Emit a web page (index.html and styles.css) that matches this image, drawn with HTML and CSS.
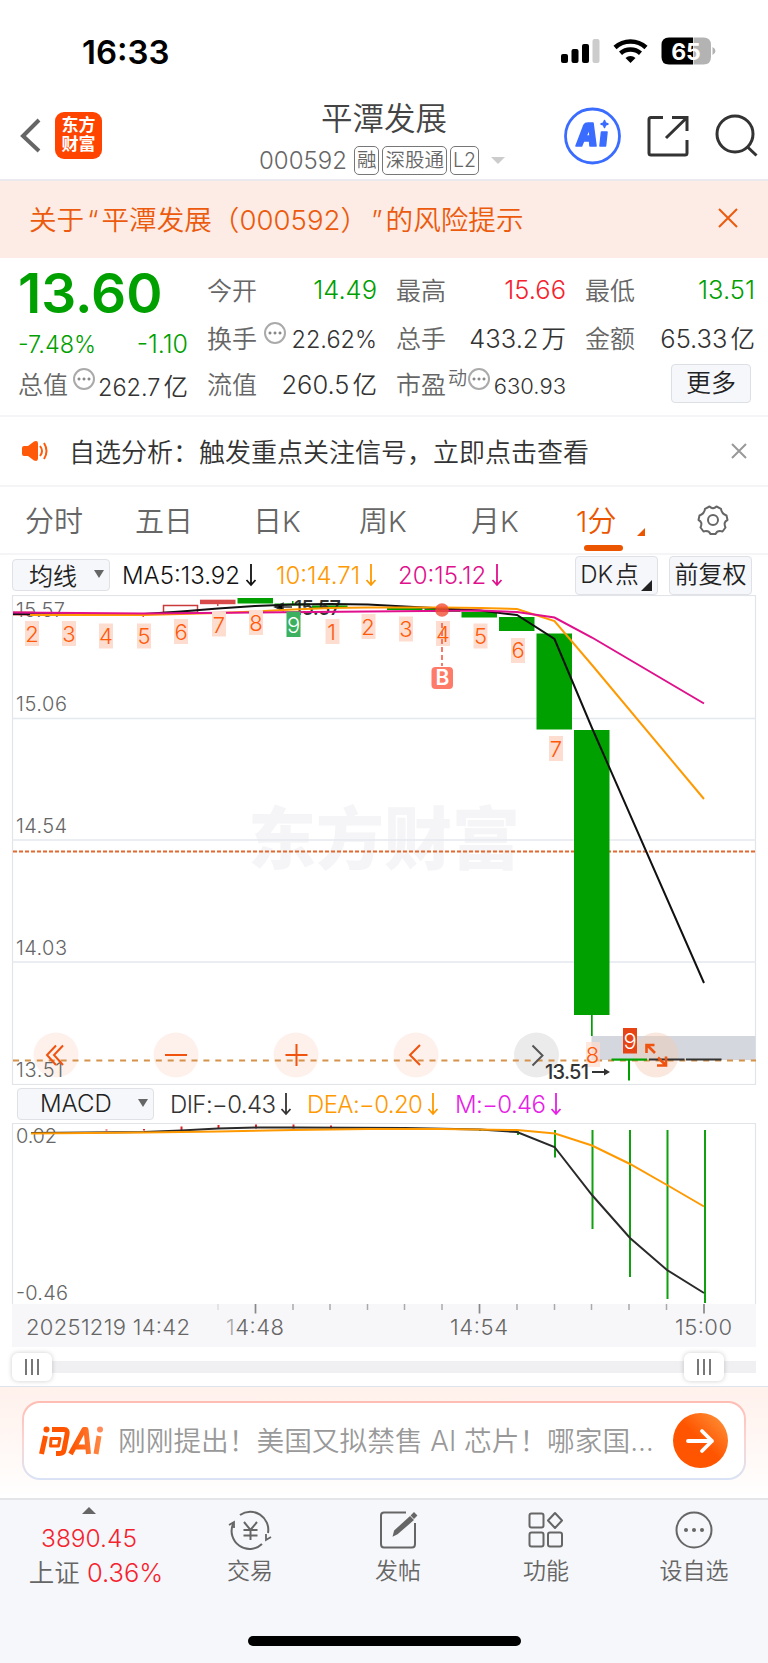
FILE: index.html
```html
<!DOCTYPE html>
<html lang="zh-CN">
<head>
  <meta charset="UTF-8">
  <title>平潭发展 000592</title>
  <link rel="stylesheet" href="styles.css">
</head>
<body>

  <div class="status">
    <span class="clock">16:33</span>
    <svg class="status-icons" width="160" height="32" viewBox="0 0 160 32">
      <rect x="2" y="18" width="7" height="9" rx="2"/>
      <rect x="12.500" y="13" width="7" height="14" rx="2"/>
      <rect x="23" y="8" width="7" height="19" rx="2"/>
      <rect x="33.500" y="3" width="7" height="24" rx="2" fill="#ccc"/>
      <path d="M56 11.500a23 23 0 0 1 31 0" fill="none" stroke="#000" stroke-width="4.500"/>
      <path d="M61.500 17.200a15 15 0 0 1 20 0" fill="none" stroke="#000" stroke-width="4.500"/>
      <path d="M71.500 27l-5-5a7.500 7.500 0 0 1 10 0z"/>
      <path d="M110 1.500h24v27h-24q-7.500 0-7.500-7.500v-12q0-7.500 7.500-7.500z"/>
      <path d="M134.500 1.500h10q7.500 0 7.500 7.500v12q0 7.500-7.500 7.500h-10zM153.500 11q3 1.500 3 4t-3 4z" fill="#b3b3b3"/>
      <text x="127" y="23.500" class="battery">65</text>
    </svg>
  </div>

  <header class="header">
    <svg class="back" width="22" height="36" viewBox="0 0 22 36"><path d="M19 2L3 18l16 15" fill="none" stroke="#666" stroke-width="4"/></svg>
    <div class="logo">东方<br>财富</div>
    <div class="title">
      <h1>平潭发展</h1>
      <div class="code">
        <span>000592</span><b>融</b><b>深股通</b><b>L2</b><i></i>
      </div>
    </div>
    <svg class="tools" width="204" height="58" viewBox="0 0 204 58">
      <circle cx="28.500" cy="29" r="27" fill="none" stroke="#3a6cff" stroke-width="2.800"/>
      <path d="M12 39l8-21q1-2 4-2h5l3 23h-6l-.4-5h-6l-2 5zM22 29h4l-.5-7zM37.500 25h5.500l-1.500 14h-5.500zM40.500 13.500l1 2.500 2.500 1-2.500 1-1 2.500-1-2.500-2.500-1 2.500-1z" fill="#3a6cff" stroke="#3a6cff" stroke-width="1.600" stroke-linejoin="round"/>
      <path d="M99 10.500H87q-2 0-2 2V46q0 2 2 2h34q2 0 2-2V33M108 10.500h15V24M123 10.500L102 31" fill="none" stroke="#333" stroke-width="3"/>
      <circle cx="171" cy="27" r="18" fill="none" stroke="#333" stroke-width="3"/>
      <path d="M183 39.500l9.500 9" stroke="#333" stroke-width="3"/>
    </svg>
  </header>

  <div class="notice">
    <span>关于<q>“</q>平潭发展（000592）<q class="close-quote">”</q>的风险提示</span>
    <svg width="20" height="20" viewBox="0 0 20 20"><path d="M1 1l18 18M19 1L1 19" stroke="#ec5a0d" stroke-width="2"/></svg>
  </div>

  <section class="quote">
    <div class="price">13.60</div>
    <div class="cell"><label>今开</label><span class="green">14.49</span></div>
    <div class="cell"><label>最高</label><span class="red">15.66</span></div>
    <div class="cell"><label>最低</label><span class="green">13.51</span></div>

    <div class="cell change"><span class="green">-7.48%</span><span class="green second">-1.10</span></div>
    <div class="cell"><label>换手</label><em></em><span class="mid">22.62%</span></div>
    <div class="cell"><label>总手</label><span>433.2<u>万</u></span></div>
    <div class="cell"><label>金额</label><span>65.33<u>亿</u></span></div>

    <div class="cell"><label>总值</label><em></em><span class="mid">262.7<u>亿</u></span></div>
    <div class="cell"><label>流值</label><span>260.5<u>亿</u></span></div>
    <div class="cell pe"><label>市盈<sup>动</sup></label><em></em><span class="small">630.93</span></div>
    <div class="cell more"><button>更多</button></div>
  </section>

  <div class="analysis">
    <svg width="26" height="22" viewBox="0 0 26 22">
      <path d="M2 6h4l6-4.500q4-1.500 4 2v15q0 3.500-4 2L6 16H2q-2 0-2-2V8q0-2 2-2z" fill="#ff5a0a"/>
      <path d="M18 6q4 5 0 10M22 3q5 8 0 16" fill="none" stroke="#ff5a0a" stroke-width="2"/>
    </svg>
    <span>自选分析：触发重点关注信号，立即点击查看</span>
    <svg class="close" width="16" height="16" viewBox="0 0 16 16"><path d="M1 1l14 14M15 1L1 15" stroke="#999" stroke-width="2"/></svg>
  </div>

  <nav class="tabs">
    <span>分时</span>
    <span>五日</span>
    <span>日K</span>
    <span>周K</span>
    <span>月K</span>
    <span class="active">1分</span>
    <svg width="32" height="32" viewBox="0 0 32 32" fill="none" stroke="#666" stroke-width="2">
      <path d="M12.500 2.500Q16 6 19.500 2.500L24 4.800Q24.500 9.500 29.500 11.500L30.500 16Q26 18 28.500 23.500L25.500 27.500Q20.500 26 18.500 30H13.500Q11.500 26 6.500 27.500L3.500 23.500Q6 18 1.500 16L2.500 11.500Q7.500 9.500 8 4.800Z" stroke-linejoin="round"/>
      <circle cx="16" cy="16" r="5"/>
    </svg>
  </nav>

  <div class="indicator">
    <div class="select">均线<i></i></div>
    <span class="ma5">MA5:13.92<svg class="down" viewBox="0 0 12 24"><path d="M6 1v21M1.500 17L6 22l4.500-5"/></svg></span>
    <span class="ma10">10:14.71<svg class="down" viewBox="0 0 12 24"><path d="M6 1v21M1.500 17L6 22l4.500-5"/></svg></span>
    <span class="ma20">20:15.12<svg class="down" viewBox="0 0 12 24"><path d="M6 1v21M1.500 17L6 22l4.500-5"/></svg></span>
    <div class="btn dk">DK<u>点</u></div>
    <div class="btn">前复权</div>
  </div>

  <!-- K线图 -->
  <svg class="chart" width="768" height="490" viewBox="0 595 768 490">
    <text x="384" y="864" class="watermark" textLength="272">东方财富</text>
    <g fill="none" stroke="#e2e4ea">
      <rect x="12.500" y="595.500" width="743" height="489" stroke-width="1.200"/>
      <path d="M12 718.500h744M12 840h744M12 962h744" stroke="#e3e7ee" stroke-width="1.500"/>
    </g>
    <path d="M13 851.500h743" stroke="#e06a30" stroke-width="1.800" stroke-dasharray="4 2"/>
    <rect x="591.500" y="1036" width="164" height="24" fill="#d4d7dd"/>

    <g class="round">
      <circle cx="56" cy="1055" r="22.500"/>
      <circle cx="176" cy="1055" r="22.500"/>
      <circle cx="296" cy="1055" r="22.500"/>
      <circle cx="416" cy="1055" r="22.500"/>
      <circle cx="536.500" cy="1055" r="22.500" class="off"/>
      <circle cx="656" cy="1055" r="22.500" class="over"/>
    </g>
    <path d="M13 1060.500h743" stroke="#d5924a" stroke-width="2" stroke-dasharray="6 5.900"/>

    <g class="axis">
      <text x="16" y="617" textLength="49">15.57</text>
      <text x="16" y="711" textLength="51">15.06</text>
      <text x="16" y="833" textLength="51">14.54</text>
      <text x="16" y="955" textLength="51">14.03</text>
      <text x="16" y="1077" textLength="47">13.51</text>
    </g>

    <g fill="#d84a4a">
      <rect x="13" y="611.500" width="20" height="4"/>
      <rect x="163.500" y="605.500" width="34" height="7" fill="#fff" stroke="#c93a3a" stroke-width="1.500"/>
      <rect x="200" y="599.700" width="35.500" height="4.500"/>
      <path d="M217 604h1.500v2h-1.500zM142.500 614h1.500v3h-1.500z"/>
    </g>
    <g fill="#00a000">
      <rect x="237.500" y="598" width="35.500" height="5.500"/>
      <rect x="274.500" y="603.500" width="35.500" height="2"/>
      <rect x="312" y="605.500" width="35.500" height="2.500"/>
      <rect x="387" y="608" width="35.500" height="2"/>
      <rect x="424.500" y="608.500" width="35.500" height="3.500"/>
      <rect x="461.500" y="612" width="35.500" height="5.500"/>
      <rect x="499" y="617" width="35.500" height="14"/>
      <rect x="536.500" y="633.500" width="35.500" height="96"/>
      <rect x="574" y="730" width="35.500" height="285"/>
      <rect x="591" y="1015" width="1.700" height="21"/>
      <rect x="611.500" y="1058.500" width="35.500" height="2.200"/>
      <rect x="628" y="1060" width="2" height="20.500"/>
      <path d="M292 601h1.500v3h-1.500z"/>
    </g>
    <path d="M649 1059.500h35.500M686 1059.500h35.500" stroke="#333" stroke-width="2"/>

    <path d="M275 607l8-3.500v7zM282 607h10" stroke="#333" stroke-width="1.500"/>
    <text x="294" y="614.500" class="high" textLength="47">15.57</text>

    <g fill="none" stroke-width="2">
      <path d="M13 614L106 614.500L144 614L181 611.500L218 608.500L255 606L293 604.500L330 604L368 604.500L405 606.500L442 608.500L480 610.500L517 615L554.500 639L592 728L704 983" stroke="#111"/>
      <path d="M30 615L144 615L218 613L255 611.500L293 609.500L330 608L368 607.500L442 607.500L480 608L517 609L554.500 621L592 665L704 799" stroke="#f90"/>
      <path d="M13 612.500L144 613.500L255 612.500L368 611.500L480 610.500L517 612L554.500 617.500L592 637.500L704 703.500" stroke="#e0108c"/>
    </g>

    <g class="tag">
      <rect x="25" y="621" width="14" height="25"/><text x="32" y="641.500">2</text>
      <rect x="62" y="621" width="14" height="25"/><text x="69" y="641.500">3</text>
      <rect x="99" y="623.500" width="14" height="25"/><text x="106" y="644">4</text>
      <rect x="137" y="623.500" width="14" height="25"/><text x="144" y="644">5</text>
      <rect x="174" y="619" width="14" height="25"/><text x="181" y="639.500">6</text>
      <rect x="212" y="611.500" width="14" height="25"/><text x="219" y="632.500">7</text>
      <rect x="249" y="610" width="14" height="25"/><text x="256" y="630.500">8</text>
      <rect x="286.500" y="611.500" width="14" height="25.500" class="buy9"/><text x="293.500" y="632.500" class="white">9</text>
      <rect x="325.500" y="619" width="14" height="25"/><text x="331.500" y="639.500">1</text>
      <rect x="361.500" y="614" width="14" height="25"/><text x="368" y="635">2</text>
      <rect x="399" y="616.500" width="14" height="25"/><text x="406" y="637">3</text>
      <rect x="436" y="621" width="14" height="25"/><text x="443" y="641.500">4</text>
      <rect x="473.500" y="623.500" width="14" height="25"/><text x="480.500" y="644">5</text>
      <rect x="511" y="638" width="14" height="25"/><text x="518" y="658">6</text>
      <rect x="549" y="736" width="14" height="25"/><text x="556" y="756.500">7</text>
      <rect x="586" y="1042" width="14" height="25" fill-opacity=".7"/><text x="592.500" y="1063">8</text>
      <rect x="623" y="1028" width="14" height="25.500" class="sell9"/><text x="630" y="1049" class="white">9</text>
    </g>

    <circle cx="442" cy="610" r="6.800" fill="#f04d35" fill-opacity=".8"/>
    <path d="M442 623v43" stroke="#f26553" stroke-width="1.700" stroke-dasharray="5 3"/>
    <rect x="431.500" y="667" width="21.500" height="22" rx="4" fill="#ff7b69"/>
    <text x="442.300" y="685" class="buy">B</text>

    <g fill="none" stroke="#f0530f" stroke-width="2">
      <path d="M56 1045.500l-9 9.500 9 10M63 1045.500l-9 9.500 9 10"/>
      <path d="M165 1055h22M285.500 1055h22M296.500 1044v22"/>
      <path d="M420 1045l-10 10 10 10"/>
      <path d="M532.500 1045.500l10 10-10 10" stroke="#555"/>
      <path d="M655 1053l-8-8M646.500 1053v-8h8M658 1057.500l8 8M657 1065.500h9v-9" stroke-width="2.600"/>
    </g>
    <text x="545" y="1079" class="low" textLength="44">13.51</text>
    <path d="M592 1072h14" stroke="#333" stroke-width="2"/>
    <path d="M604 1068.500l6 3.500-6 3.500z" fill="#333"/>
  </svg>

  <div class="indicator macd">
    <div class="select">MACD<i></i></div>
    <span class="dif">DIF:−0.43<svg class="down" viewBox="0 0 12 24"><path d="M6 1v21M1.500 17L6 22l4.500-5"/></svg></span>
    <span class="ma10">DEA:−0.20<svg class="down" viewBox="0 0 12 24"><path d="M6 1v21M1.500 17L6 22l4.500-5"/></svg></span>
    <span class="m">M:−0.46<svg class="down" viewBox="0 0 12 24"><path d="M6 1v21M1.500 17L6 22l4.500-5"/></svg></span>
  </div>

  <!-- MACD + 时间轴 -->
  <svg class="chart" width="768" height="224" viewBox="0 1123 768 224">
    <path d="M12.500 1304V1123.500h743V1304" fill="none" stroke="#e2e4ea" stroke-width="1.200"/>
    <g class="axis">
      <text x="16" y="1142.500" textLength="41">0.02</text>
      <text x="16" y="1299.500" textLength="52">-0.46</text>
    </g>
    <path d="M181.500 1126.500v4M218.500 1125v4M256 1124.500v4M293.500 1124.500v4M331 1125.500v3M144 1129v1.500M106.500 1129.500v1" stroke="#e02020" stroke-width="2"/>
    <path d="M480 1130v1M518 1130v5M555 1130v27.500M592.500 1130v99M630 1130v147M667.500 1130v169M705 1130v173" stroke="#10a010" stroke-width="2"/>
    <g fill="none" stroke-width="2">
      <path d="M31 1133L144 1132L181 1130.500L218 1128.500L256 1127.500L293 1127.500L405 1128L480 1129.500L517 1132L554.500 1147L592 1195L630 1238L667 1270L704 1293" stroke="#2a2a2a"/>
      <path d="M31 1133.500L144 1132.500L218 1131.500L293 1130L368 1129L442 1129L517 1130L555 1133.500L592 1145.500L630 1164L667 1185L704 1206.500" stroke="#f90"/>
    </g>
    <rect x="12" y="1304" width="744" height="43" fill="#f7f7fa"/>
    <path d="M293 1304v6M330 1304v6M367.500 1304v6M404.500 1304v6M442 1304v6M517 1304v6M554.500 1304v6M591.500 1304v6M629 1304v6M666.500 1304v6" stroke="#aaa" stroke-width="1.500"/>
    <path d="M218 1304v6" stroke="#ddd" stroke-width="1.500"/>
    <path d="M255.500 1304v9.500M479.500 1304v9.500M704 1304v9.500" stroke="#888" stroke-width="1.700"/>
    <g class="time">
      <text x="26" y="1335" textLength="164">20251219 14:42</text>
      <text x="226" y="1335" textLength="58"><tspan fill="#aaa">1</tspan>4:48</text>
      <text x="450" y="1335" textLength="58">14:54</text>
      <text x="675" y="1335" textLength="57">15:00</text>
    </g>
  </svg>

  <div class="slider">
    <div class="handle"><i></i><i></i><i></i></div>
    <div class="handle"><i></i><i></i><i></i></div>
  </div>

  <div class="ask">
    <div class="ask-box">
      <svg width="64" height="30" viewBox="0 0 64 30">
        <defs>
          <linearGradient id="ai" gradientUnits="userSpaceOnUse" x1="0" y1="0" x2="64" y2="0"><stop offset=".5" stop-color="#ff5500"/><stop offset="1" stop-color="#ff8a4a"/></linearGradient>
        </defs>
        <g fill="none" stroke="url(#ai)" stroke-width="5" stroke-linejoin="round">
          <path d="M6.500 10L2.500 28M13 3.500h12q4 0 3 5L25 24q-.5 3.500-4.500 3.500H17"/>
          <path d="M31.500 28L45 3.500h2L49.500 28M37 21h11"/>
          <path d="M60 10L57 28"/>
          <path d="M12 12.500h9l-1.500 7.500h-8z" stroke-width="3"/>
        </g>
        <circle cx="7.500" cy="3.500" r="3" fill="#ff5500"/>
        <circle cx="61" cy="3.500" r="3" fill="#ff8a5a"/>
      </svg>
      <span>刚刚提出！美国又拟禁售 AI 芯片！哪家国…</span>
      <div class="go">
        <svg width="30" height="26" viewBox="0 0 30 26"><path d="M2 13h24M16 3l10 10-10 10" fill="none" stroke="#fff" stroke-width="3.800" stroke-linecap="round" stroke-linejoin="round"/></svg>
      </div>
    </div>
  </div>

  <footer class="bottom">
    <div class="index">
      <i></i>
      <span>3890.45</span>
      <p>上证 <span>0.36%</span></p>
    </div>
    <div class="item">
      <svg width="44" height="40" viewBox="0 0 44 40" fill="none" stroke="#666" stroke-width="2">
        <path d="M12 5A18 18 0 0 1 40 23M34 34A18 18 0 0 1 5 14"/>
        <path d="M1 15l5-3v6M43 27l-5 3v-6" stroke-width="1.800"/>
        <path d="M16 12l6.500 8 6.500-8M22.500 20v10M15.500 20h14M15.500 25.500h14"/>
      </svg>
      <span>交易</span>
    </div>
    <div class="item">
      <svg width="44" height="40" viewBox="0 0 44 40" fill="none" stroke="#666" stroke-width="2">
        <path d="M30 2.500H8q-3 0-3 3V34q0 3.500 3 3.500h28q3 0 3-3.500V13"/>
        <path d="M18 25l1-4L34 7.500l2.500 2.500L21 23.500z" fill="#666"/>
        <path d="M36 5.500l2-2 2 2-2 2z" fill="#666"/>
      </svg>
      <span>发帖</span>
    </div>
    <div class="item">
      <svg width="44" height="40" viewBox="0 0 44 40" fill="none" stroke="#666" stroke-width="2">
        <rect x="5.500" y="3.500" width="14" height="14" rx="2"/>
        <rect x="5.500" y="22.500" width="14" height="14" rx="2"/>
        <rect x="24" y="22.500" width="14" height="14" rx="2"/>
        <path d="M31 3l7 7.500-7 7.500-7-7.500z" stroke-linejoin="round"/>
      </svg>
      <span>功能</span>
    </div>
    <div class="item">
      <svg width="44" height="40" viewBox="0 0 44 40">
        <circle cx="22" cy="20" r="17.500" fill="none" stroke="#666" stroke-width="2"/>
        <g fill="#666"><circle cx="14" cy="20" r="2"/><circle cx="22" cy="20" r="2"/><circle cx="30" cy="20" r="2"/></g>
      </svg>
      <span>设自选</span>
    </div>
    <div class="home"></div>
  </footer>

</body>
</html>
```
FILE: styles.css
```css
* {
  box-sizing: border-box;
}
body {
  margin: 0;
  width: 768px;
  height: 1663px;
  overflow: hidden;
  background: #fff;
  color: #333;
  font-family: Inter, "Noto Sans CJK SC", sans-serif;
  font-weight: 350;
}
svg {
  display: block;
  flex: none;
}
u {
  text-decoration: none;
}
.status {
  display: flex;
  justify-content: space-between;
  align-items: center;
  height: 102px;
  padding: 2px 49px 0 82px;
  color: #000;
}
.clock {
  font-size: 33px;
  font-weight: 600;
}
.battery {
  font-size: 23px;
  font-weight: 700;
  fill: #fff;
  text-anchor: middle;
}

/* header */
.header {
  display: flex;
  align-items: center;
  height: 79px;
  padding-left: 20px;
  border-bottom: 2px solid #e9e9ee;
}
.back {
  margin-top: -10px;
}
.logo {
  width: 47px;
  height: 47px;
  margin: -10px 0 0 13px;
  padding-top: 4px;
  border-radius: 9px;
  background: #ff4400;
  color: #fff;
  font-size: 17px;
  line-height: 19px;
  font-weight: 700;
  text-align: center;
}
.title {
  width: 300px;
  margin-left: 132px;
  margin-top: -4px;
  text-align: center;
}
.title h1 {
  margin: 0;
  font-size: 31.500px;
  line-height: 40px;
  font-weight: 350;
  color: #444;
}
.code {
  display: flex;
  justify-content: center;
  align-items: center;
  gap: 3px;
  height: 36px;
  margin: 4px 0 0 -4px;
  color: #666;
  white-space: nowrap;
}
.code span {
  margin-right: 4px;
  font-size: 24px;
}
.code b {
  height: 29px;
  padding: 0 2px;
  border: 1px solid #777;
  border-radius: 5px;
  font-size: 19.500px;
  line-height: 26px;
  font-weight: 350;
}
.code i {
  margin-left: 9px;
  border: 7px solid transparent;
  border-top-color: #ccc;
  border-bottom: 0;
}
.tools {
  margin: -9px 0 0 30px;
}
.notice {
  display: flex;
  justify-content: space-between;
  align-items: center;
  height: 77px;
  padding: 0 30px 3px 29px;
  background: #fcece5;
  color: #ec5a0d;
  font-size: 27.600px;
}
.notice q {
  margin: 0 3px;
  quotes: none;
  font-family: Inter, sans-serif;
}
.notice .close-quote {
  margin-left: 17px;
}

/* quote */
.quote {
  display: grid;
  grid-template-columns: repeat(4, 169px);
  grid-template-rows: 56px 40px 52px;
  column-gap: 20px;
  height: 159px;
  padding: 3px 12px 0 19px;
  border-bottom: 2px solid #f5f5f7;
}
.price {
  margin-left: -1px;
  font-size: 55px;
  line-height: 64px;
  font-weight: 600;
  color: #00a000;
}
.cell {
  display: flex;
  justify-content: space-between;
  align-items: center;
  font-size: 25.500px;
  white-space: nowrap;
  color: #333;
}
.cell label {
  margin-left: -1px;
  font-size: 25px;
  color: #666;
}
.cell u {
  margin-left: 3px;
  font-size: 24.500px;
}
.cell .mid {
  margin-top: 4px;
  font-size: 23.500px;
}
.cell .small {
  margin-top: 6px;
  font-size: 22px;
}
.cell em {
  width: 22px;
  height: 22px;
  margin: -8px -4px 0 -2px;
  border: 2px solid #aaa;
  border-radius: 50%;
  background: radial-gradient(circle, #888 1.200px, transparent 1.800px) -5px 0, radial-gradient(circle, #888 1.200px, transparent 1.800px) 0 0, radial-gradient(circle, #888 1.200px, transparent 1.800px) 5px 0;
  background-repeat: no-repeat;
}
.cell.change {
  padding-top: 14px;
  font-size: 23.500px;
}
.change .green:first-child {
  margin-left: -1px;
}
.change .second {
  font-size: 25px;
}
.cell .green {
  color: #00a000;
}
.cell .red {
  color: #f5222d;
}
.cell sup {
  position: relative;
  top: -9px;
  margin-left: 2px;
  font-size: 19px;
  line-height: 0;
  vertical-align: baseline;
}
.pe em {
  margin-left: -6px;
}
.cell.more {
  justify-content: flex-end;
}
.more button {
  width: 80px;
  height: 39px;
  margin-right: 4px;
  padding: 0;
  border: 1px solid #dcdfe4;
  border-radius: 4px;
  background: #f6f7fa;
  color: #222;
  font: 350 25px/35px Inter, "Noto Sans CJK SC", sans-serif;
}
.analysis {
  display: flex;
  align-items: center;
  height: 70px;
  padding: 0 21px 0 22px;
  border-bottom: 2px solid #f5f5f7;
  font-size: 26px;
}
.analysis span {
  margin: -1px 0 0 21px;
}
.analysis .close {
  margin-left: auto;
}

/* tabs */
.tabs {
  display: grid;
  grid-template-columns: 110px 118px 106px 112px 105px 121px 40px;
  align-items: center;
  height: 68px;
  padding-left: 25px;
  border-bottom: 2px solid #f5f5f7;
  font-size: 29px;
  color: #666;
}
.tabs span {
  margin-top: -3px;
}
.tabs .active {
  position: relative;
  color: #ec5500;
}
.active::before {
  content: "";
  position: absolute;
  left: 8px;
  bottom: -11px;
  width: 39px;
  height: 6px;
  border-radius: 3px;
  background: #ec5500;
}
.active::after {
  content: "";
  position: absolute;
  left: 61px;
  bottom: 4px;
  border-left: 8px solid transparent;
  border-bottom: 8px solid #ec5500;
}
.indicator {
  display: flex;
  align-items: center;
  height: 40px;
  padding: 0 16px 0 12px;
  font-size: 24px;
  white-space: nowrap;
}
.indicator span {
  display: flex;
  align-items: center;
}
.select {
  display: flex;
  justify-content: space-between;
  align-items: center;
  width: 98px;
  height: 32px;
  padding: 0 5px 2px 16px;
  border: 1px solid #dfe1e6;
  border-radius: 4px;
  background: #f6f7fa;
  color: #222;
}
.select i {
  border: 5px solid transparent;
  border-top: 8px solid #666;
  border-bottom: 0;
}
.down {
  width: 12px;
  height: 24px;
  margin-left: 5px;
  fill: none;
  stroke: currentColor;
  stroke-width: 1.800;
}
.ma5 {
  width: 154px;
  margin-left: 12px;
  color: #111;
}
.ma10 {
  width: 122px;
  color: #f90;
}
.ma20 {
  color: #e0108c;
}
.btn {
  width: 83px;
  height: 39px;
  margin-left: 11px;
  border: 1px solid #dfe1e6;
  border-radius: 4px;
  background: #f6f7fa;
  color: #222;
  line-height: 36px;
  text-align: center;
}
.dk {
  position: relative;
  margin-left: auto;
  padding-right: 14px;
}
.dk u {
  margin-left: 2px;
  font-size: 23.500px;
}
.dk::after {
  content: "";
  position: absolute;
  right: 5px;
  bottom: 3px;
  border-left: 11px solid transparent;
  border-bottom: 11px solid #222;
}
.macd {
  height: 38px;
  padding-left: 17px;
}
.macd span {
  letter-spacing: -.6px;
}
.macd .select {
  width: 137px;
  padding-left: 22px;
}
.dif {
  width: 137px;
  margin-left: 16px;
}
.macd .ma10 {
  width: 148px;
}
.m {
  color: #e61ee6;
}

/* charts */
.watermark {
  font-size: 68px;
  font-weight: 900;
  fill: #f5f5f7;
  text-anchor: middle;
}
.round {
  fill: #fef0ea;
}
.round .off {
  fill: #ebebeb;
}
.round .over {
  fill: #f5cdb9;
  fill-opacity: .45;
}
.axis {
  font-size: 20px;
  fill: #666;
}
.high,
.low {
  font-size: 20px;
  font-weight: 500;
  fill: #333;
}
.tag {
  font-size: 22px;
  fill: #ff5a0a;
  text-anchor: middle;
}
.tag rect {
  fill: #fdddcf;
}
.tag .buy9 {
  fill: #3bb05f;
}
.tag .sell9 {
  fill: #e64415;
}
.tag .white {
  fill: #fff;
}
.buy {
  font-size: 21px;
  font-weight: 600;
  fill: #fff;
  text-anchor: middle;
}
.time {
  font-size: 22px;
  fill: #666;
}
.slider {
  display: flex;
  justify-content: space-between;
  align-items: center;
  height: 39px;
  margin: 0 12px;
  padding-right: 32px;
  padding-top: 1px;
  background: linear-gradient(#f0f0f3, #f0f0f3) no-repeat 0 14px / 100% 12px;
}
.handle {
  display: flex;
  justify-content: center;
  align-items: center;
  gap: 4px;
  width: 40px;
  height: 28px;
  border-radius: 6px;
  background: #fff;
  box-shadow: 0 0 5px rgba(0, 0, 0, .2);
}
.handle i {
  width: 2px;
  height: 16px;
  background: #777;
}

/* ask */
.ask {
  height: 112px;
  padding: 14px 22px;
  border-top: 1px solid #dfe3ec;
  background: linear-gradient(#fff1ec, #fffaf8 70%, #fff);
}
.ask-box {
  display: flex;
  align-items: center;
  height: 79px;
  padding: 0 16px 0 15px;
  border: 2px solid transparent;
  border-radius: 18px;
  background: linear-gradient(#fff, #fff) padding-box, linear-gradient(#ffbcb2, #fbd5d2 50%, #d9e3f6) border-box;
  font-size: 27.700px;
  color: #999;
  white-space: nowrap;
}
.ask-box span {
  margin: -3px 0 0 15px;
}
.go {
  display: flex;
  justify-content: center;
  align-items: center;
  width: 55px;
  height: 55px;
  margin-left: auto;
  border-radius: 50%;
  background: linear-gradient(45deg, #ff5500 50%, #ff9a40);
}

/* bottom bar */
.bottom {
  display: grid;
  grid-template-columns: 176px 148px 148px 148px 148px;
  grid-template-rows: 136px 12px;
  height: 166px;
  border-top: 2px solid #e3e5e8;
  background: #f6f7fa;
  color: #666;
  font-size: 24.500px;
}
.index {
  display: flex;
  flex-direction: column;
  align-items: center;
  padding-top: 7px;
  padding-left: 2px;
}
.index i {
  border: 7px solid transparent;
  border-bottom-color: #666;
  border-top: 0;
}
.index span {
  color: #f5222d;
}
.index > span {
  margin-top: 9px;
  line-height: 30px;
}
.index p {
  margin: 3px 0 0;
  padding-left: 14px;
  font-size: 25.500px;
  line-height: 34px;
}
.item {
  display: flex;
  flex-direction: column;
  align-items: center;
  padding-top: 10px;
}
.item span {
  margin-top: 4px;
  font-size: 23px;
  line-height: 34px;
}
.home {
  grid-column: 1 / -1;
  width: 273px;
  height: 10px;
  margin: 0 auto;
  border-radius: 5px;
  background: #000;
}
```
